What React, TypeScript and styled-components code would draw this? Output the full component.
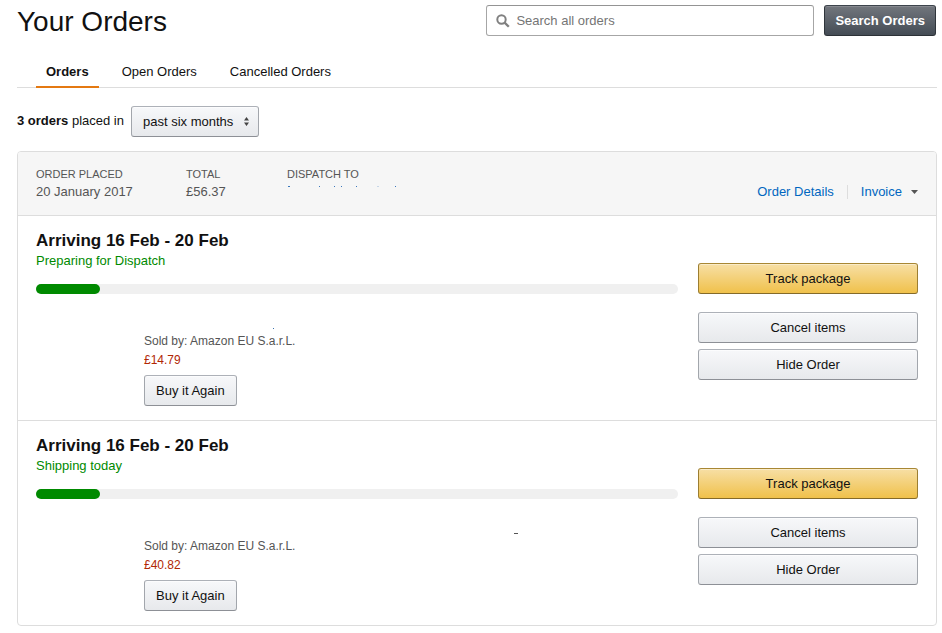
import React from "react";
import styled, { createGlobalStyle, css } from "styled-components";

const GlobalStyle = createGlobalStyle`
  *, *::before, *::after { box-sizing: border-box; }
  body {
    margin: 0;
    background: #fff;
    color: #111;
    font-family: "Liberation Sans", Arial, sans-serif;
    font-size: 13px;
    line-height: 19px;
  }
  button, input, select { font: inherit; color: inherit; }
`;

const Page = styled.main`
  padding: 5px 5px 0 17px;
`;

const Header = styled.header`
  display: flex;
  align-items: center;
  justify-content: space-between;
  height: 31px;
`;

const Title = styled.h1`
  margin: 0;
  padding-top: 2px;
  font-size: 28px;
  font-weight: 400;
  line-height: 36px;
`;

const SearchForm = styled.form`
  display: flex;
  gap: 10px;
  padding-right: 1px;
`;

const SearchBox = styled.label`
  display: flex;
  align-items: center;
  gap: 6px;
  width: 328px;
  height: 31px;
  padding: 0 9px;
  border: 1px solid #a6a6a6;
  border-top-color: #949494;
  border-radius: 3px;
`;

const SearchInput = styled.input`
  flex: 1;
  min-width: 0;
  padding: 0;
  border: 0;
  outline: 0;
  background: transparent;
  &::placeholder { color: #757575; opacity: 1; }
`;

const variants = {
  plain: css`
    border-color: #adb1b8 #a2a6ac #8d9096;
    background: linear-gradient(#f7f8fa, #e7e9ec);
    box-shadow: inset 0 1px 0 rgba(255, 255, 255, 0.6);
  `,
  primary: css`
    border-color: #a88734 #9c7e31 #846a29;
    background: linear-gradient(#f7dfa5, #f0c14b);
    box-shadow: inset 0 1px 0 rgba(255, 255, 255, 0.4);
  `,
  dark: css`
    padding: 0 10px;
    border-color: #3d444c #2f353b #2c3137;
    background: linear-gradient(#72767d, #444c55);
    box-shadow: inset 0 1px 0 rgba(255, 255, 255, 0.15);
    color: #fff;
    font-weight: 700;
  `,
};

const Button = styled.button<{ $variant?: keyof typeof variants }>`
  height: 31px;
  padding: 0 11px;
  border: 1px solid;
  border-radius: 3px;
  white-space: nowrap;
  cursor: pointer;
  ${({ $variant = "plain" }) => variants[$variant]}
`;

const Tabs = styled.nav`
  display: flex;
  gap: 13px;
  margin-top: 20px;
  padding: 0 19px;
  border-bottom: 1px solid #ddd;
`;

const Tab = styled.a<{ $active?: boolean }>`
  margin-bottom: -1px;
  padding: 6px 10px 5px;
  border-bottom: 2px solid ${({ $active }) => ($active ? "#e47911" : "transparent")};
  color: #111;
  font-weight: ${({ $active }) => ($active ? 700 : 400)};
  text-decoration: none;
`;

const Filter = styled.div`
  display: flex;
  align-items: center;
  gap: 7px;
  margin: 18px 0 14px;
  > label { padding-bottom: 2px; }
`;

const SelectWrap = styled.span`
  display: grid;
  align-items: center;
  > * { grid-area: 1 / 1; }
  > svg { justify-self: end; margin-right: 10px; pointer-events: none; }
`;

const Select = styled.select`
  appearance: none;
  height: 31px;
  padding: 0 24px 0 11px;
  border: 1px solid;
  border-radius: 3px;
  ${variants.plain}
`;

const Card = styled.section`
  border: 1px solid #ddd;
  border-radius: 4px;
`;

const Summary = styled.div`
  display: flex;
  align-items: flex-end;
  justify-content: space-between;
  padding: 14px 18px 14px;
  border-radius: 3px 3px 0 0;
  background: #f6f6f6;
  color: #555;
`;

const Facts = styled.dl`
  display: grid;
  grid-template-columns: 150px 101px 112px;
  margin: 0;
`;

const FactName = styled.dt`
  font-size: 11px;
  line-height: 16px;
`;

const FactValue = styled.dd`
  margin: 0;
  > svg { display: block; }
`;

const Links = styled.div`
  display: flex;
  align-items: center;
`;

const Link = styled.a`
  display: flex;
  align-items: center;
  gap: 9px;
  color: #0066c0;
  text-decoration: none;
`;

const Divider = styled.span`
  width: 1px;
  height: 14px;
  margin: 0 13px;
  background: #ddd;
`;

const Shipment = styled.article`
  display: grid;
  grid-template-columns: 1fr 220px;
  gap: 20px;
  padding: 14px 18px;
  border-top: 1px solid #ddd;
`;

const Arrival = styled.h2`
  margin: 0;
  font-size: 17px;
  font-weight: 700;
  line-height: 21px;
`;

const Status = styled.p`
  margin: 0;
  color: #008a00;
`;

const Track = styled.div`
  height: 10px;
  margin-top: 14px;
  border-radius: 5px;
  background: #f0f0f0;
`;

const Fill = styled.div`
  height: 10px;
  border-radius: 5px;
  background: #008a00;
`;

const Item = styled.div`
  display: flex;
  flex-direction: column;
  align-items: flex-start;
  padding: 26px 0 0 108px;
`;

const ItemMark = styled.svg`
  display: block;
  height: 12px;
  width: 100%;
`;

const Seller = styled.div`
  color: #555;
  font-size: 12px;
  line-height: 18px;
`;

const Price = styled.div`
  margin: 1px 0 5px;
  color: #b12704;
  font-size: 12px;
`;

const Actions = styled.div`
  display: flex;
  flex-direction: column;
  gap: 6px;
  padding-top: 33px;
  > :first-child { margin-bottom: 12px; }
`;

const shipments = [
  { id: "a", arriving: "Arriving 16 Feb - 20 Feb", status: "Preparing for Dispatch", price: "£14.79", progress: 10, mark: { x: 129, y: 8, w: 1, color: "#3b73af" } },
  { id: "b", arriving: "Arriving 16 Feb - 20 Feb", status: "Shipping today", price: "£40.82", progress: 10, mark: { x: 370, y: 8, w: 4, color: "#555" } },
];

export default function App() {
  return (
    <>
      <GlobalStyle />
      <Page>
        <Header>
          <Title>Your Orders</Title>
          <SearchForm role="search" onSubmit={(e) => e.preventDefault()}>
            <SearchBox>
              <svg width="14" height="14" viewBox="0 0 14 14" fill="none" stroke="#808080" aria-hidden="true">
                <circle cx="5.5" cy="5.5" r="4.2" strokeWidth="2" />
                <path d="M8.6 8.6 12.8 12.8" strokeWidth="2.3" />
              </svg>
              <SearchInput type="text" placeholder="Search all orders" aria-label="Search all orders" />
            </SearchBox>
            <Button $variant="dark" type="submit">Search Orders</Button>
          </SearchForm>
        </Header>

        <Tabs>
          <Tab href="#orders" $active aria-current="page">Orders</Tab>
          <Tab href="#open">Open Orders</Tab>
          <Tab href="#cancelled">Cancelled Orders</Tab>
        </Tabs>

        <Filter>
          <label htmlFor="period"><b>3 orders</b> placed in</label>
          <SelectWrap>
            <Select id="period" defaultValue="6m">
              <option value="6m">past six months</option>
            </Select>
            <svg width="5" height="9" viewBox="0 0 5 9" fill="#444" aria-hidden="true">
              <path d="M0 3.5 2.5 0 5 3.5zM0 5.5h5L2.5 9z" />
            </svg>
          </SelectWrap>
        </Filter>

        <Card>
          <Summary>
            <Facts>
              <div><FactName>ORDER PLACED</FactName><FactValue>20 January 2017</FactValue></div>
              <div><FactName>TOTAL</FactName><FactValue>£56.37</FactValue></div>
              <div>
                <FactName>DISPATCH TO</FactName>
                <FactValue>
                  <svg width="112" height="8" viewBox="0 0 112 8" fill="#3b78bd" aria-hidden="true">
                    <path d="M1 4h2v1H1zM32 4h1v1h-1zM47 4h1v1h-1zM54 4h1v1h-1zM69 4h1v1h-1zM108 4h1v1h-1z" />
                    <path d="M90 4h2v1h-2z" opacity=".25" />
                  </svg>
                </FactValue>
              </div>
            </Facts>
            <Links>
              <Link href="#details">Order Details</Link>
              <Divider />
              <Link href="#invoice">
                Invoice
                <svg width="7" height="4" viewBox="0 0 7 4" fill="#555" aria-hidden="true">
                  <path d="M0 0h7L3.5 4z" />
                </svg>
              </Link>
            </Links>
          </Summary>

          {shipments.map((s) => (
            <Shipment key={s.id}>
              <div>
                <Arrival>{s.arriving}</Arrival>
                <Status>{s.status}</Status>
                <Track role="progressbar" aria-label={s.status} aria-valuenow={s.progress}>
                  <Fill style={{ width: `${s.progress}%` }} />
                </Track>
                <Item>
                  <ItemMark aria-hidden="true">
                    <rect x={s.mark.x} y={s.mark.y} width={s.mark.w} height="1" fill={s.mark.color} />
                  </ItemMark>
                  <Seller>Sold by: Amazon EU S.a.r.L.</Seller>
                  <Price>{s.price}</Price>
                  <Button type="button">Buy it Again</Button>
                </Item>
              </div>
              <Actions>
                <Button $variant="primary" type="button">Track package</Button>
                <Button type="button">Cancel items</Button>
                <Button type="button">Hide Order</Button>
              </Actions>
            </Shipment>
          ))}
        </Card>
      </Page>
    </>
  );
}
